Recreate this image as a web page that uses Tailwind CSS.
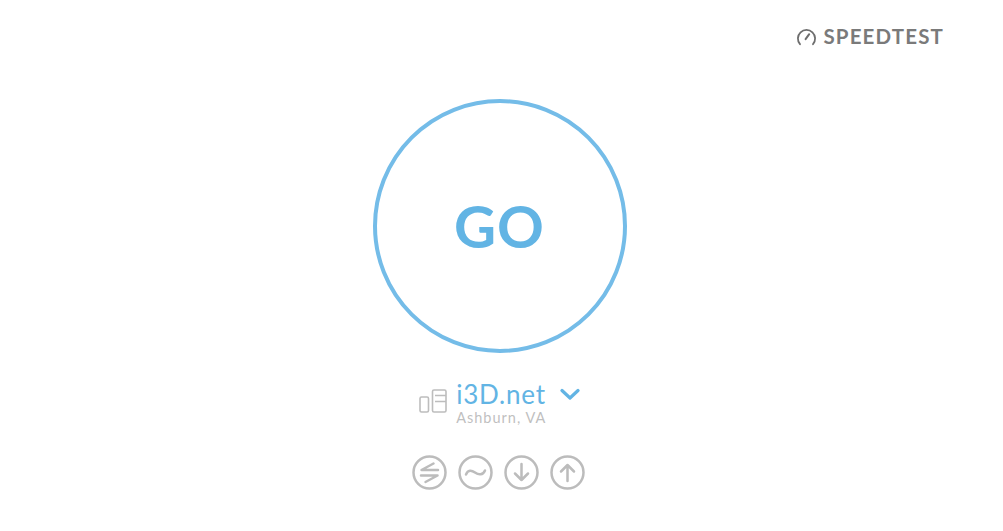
<!DOCTYPE html>
<html lang="en">
<head>
    <meta charset="UTF-8">
    <title>Speedtest</title>
    <script src="https://cdn.jsdelivr.net/npm/@tailwindcss/browser@4"></script>
</head>
<body class="bg-white h-[531px] overflow-hidden font-['Lato',sans-serif]">
    <!-- Logo -->
    <header class="flex justify-end items-center h-[27px] mt-[23px] pr-[59px] gap-[6px] text-[#6e6e6e]">
        <svg class="w-[21px] h-[18px]" viewBox="0 0 21 18" fill="none" stroke="currentColor" stroke-width="1.8" stroke-linecap="round">
            <path d="M4 16.2A8.6 8.6 0 1 1 17 16.2"/>
            <path d="M9.6 11.2L13.2 6.2" stroke-width="2"/>
        </svg>
        <span class="text-[20.5px] leading-none font-bold tracking-[1.15px] text-[#7a7a7a]">SPEEDTEST</span>
    </header>

    <main class="flex flex-col items-center pr-[4px]">
        <!-- Go button -->
        <button class="mt-[49px] w-[254px] h-[254px] rounded-full border-[4px] border-[#74bce8] flex items-center justify-center">
            <span class="text-[58px] leading-none font-bold tracking-[1px] text-[#62b4e4]">GO</span>
        </button>

        <!-- Server -->
        <div class="mt-[27px] flex items-start h-[44px]">
            <svg class="w-[28px] h-[24px] mt-[9px] mr-[9px]" viewBox="0 0 28 24" fill="none" stroke="#bdbdbd" stroke-width="1.6">
                <rect x="1" y="8" width="8.500" height="15" rx="1.500"/>
                <rect x="13.500" y="1" width="13.500" height="22" rx="1.500"/>
                <path d="M16 6.500H27M16 12.500H27"/>
            </svg>
            <div class="flex flex-col">
                <div class="flex items-center">
                    <span class="text-[26px] leading-[29px] text-[#62b4e4] tracking-[0.8px]">i3D.net</span>
                    <svg class="w-[20px] h-[13px] ml-[14px]" viewBox="0 0 20 13" fill="none" stroke="#62b4e4" stroke-width="3.200" stroke-linecap="round" stroke-linejoin="round">
                        <path d="M2 2.500L10 10L18 2.500"/>
                    </svg>
                </div>
                <span class="text-[14.5px] leading-[18px] text-[#bfbfbf] tracking-[1px]">Ashburn, VA</span>
            </div>
        </div>

        <!-- Result icons -->
        <div class="mt-[31px] pr-[2px] flex gap-[11px]">
            <svg class="w-[35px] h-[35px]" viewBox="0 0 35 35" fill="none" stroke="#bcbcbc" stroke-width="2.500" stroke-linecap="round" stroke-linejoin="round">
                <circle cx="17.500" cy="17.500" r="16"/>
                <path d="M21.500 8.500L9.500 15H26"/>
                <path d="M9 20.500H25.500L13.500 27"/>
            </svg>
            <svg class="w-[35px] h-[35px]" viewBox="0 0 35 35" fill="none" stroke="#bcbcbc" stroke-width="2.500" stroke-linecap="round">
                <circle cx="17.500" cy="17.500" r="16"/>
                <path d="M8 19.500C10 14.500 13.500 15 17 17.500S25 20.500 27 15.500"/>
            </svg>
            <svg class="w-[35px] h-[35px]" viewBox="0 0 35 35" fill="none" stroke="#bcbcbc" stroke-width="2.500" stroke-linecap="round" stroke-linejoin="round">
                <circle cx="17.500" cy="17.500" r="16"/>
                <path d="M17.500 9V25M11 18.500L17.500 25L24 18.500"/>
            </svg>
            <svg class="w-[35px] h-[35px]" viewBox="0 0 35 35" fill="none" stroke="#bcbcbc" stroke-width="2.500" stroke-linecap="round" stroke-linejoin="round">
                <circle cx="17.500" cy="17.500" r="16"/>
                <path d="M17.500 26V10M11 16.500L17.500 10L24 16.500"/>
            </svg>
        </div>
    </main>
</body>
</html>
